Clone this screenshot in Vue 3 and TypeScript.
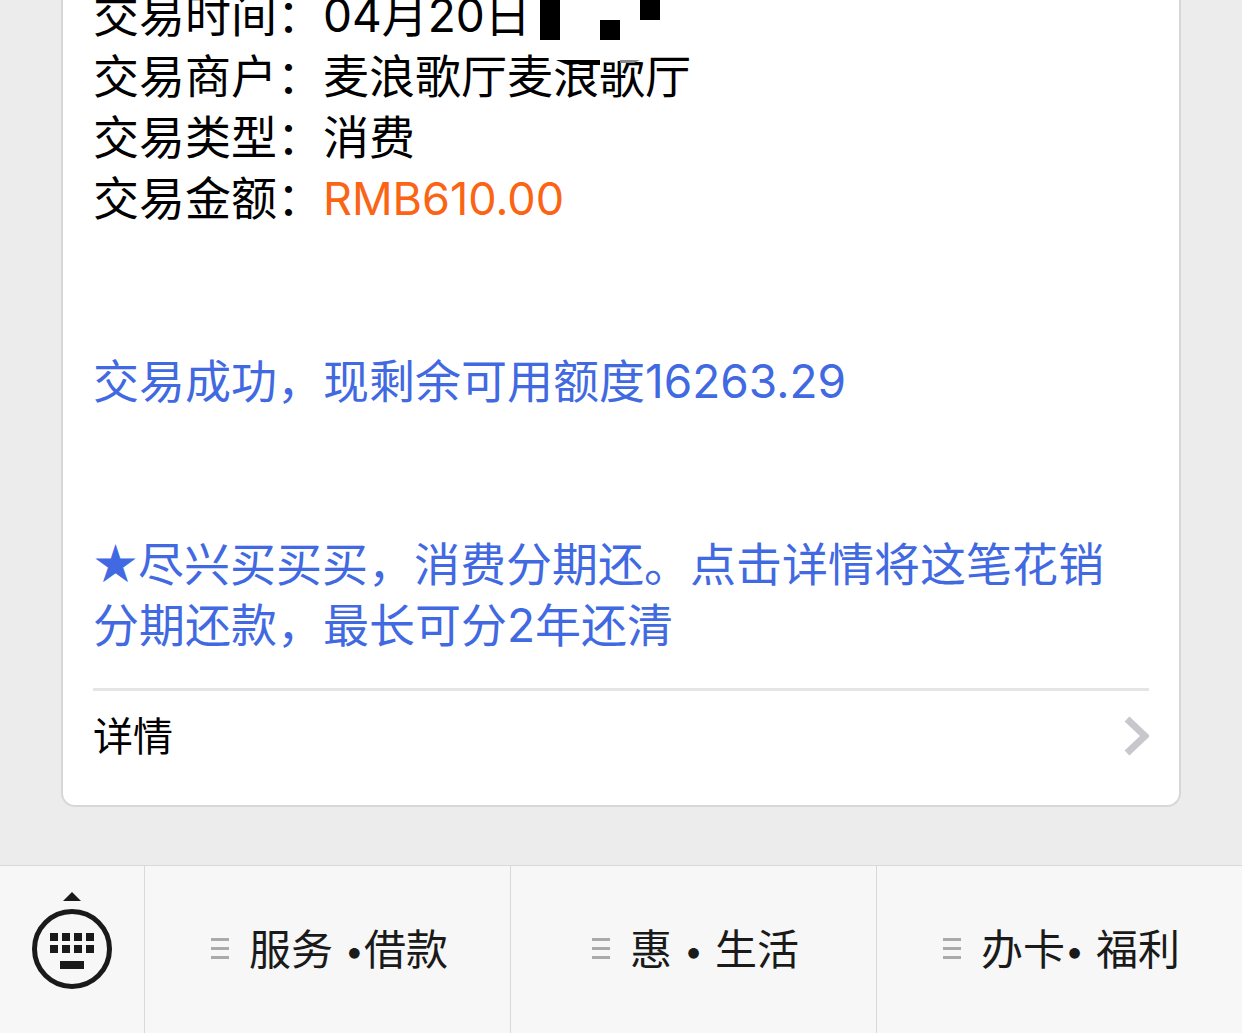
<script setup lang="ts">
interface Field {
  label: string
  value: string
  accent?: boolean
  masked?: boolean
}

interface Menu {
  before: string
  after: string
}

const fields: Field[] = [
  { label: '交易时间', value: '04月20日', masked: true },
  { label: '交易商户', value: '麦浪歌厅麦浪歌厅' },
  { label: '交易类型', value: '消费' },
  { label: '交易金额', value: 'RMB610.00', accent: true },
]

const menus: Menu[] = [
  { before: '服务 ', after: '借款' },
  { before: '惠 ', after: ' 生活' },
  { before: '办卡', after: ' 福利' },
]
const keyColumns: number[] = [18, 30, 42, 54]
</script>

<template>
  <div class="screen" lang="zh-CN">
    <main class="chat">
      <article class="card">
        <div class="message">
          <p v-for="field in fields" :key="field.label" class="row">
            <span>{{ field.label }}：</span><span :class="{ accent: field.accent }">{{ field.value }}</span>
            <svg v-if="field.masked" class="mask" width="120" height="66" viewBox="0 0 120 66" aria-hidden="true">
              <path fill="#fff" d="M16 40h84v21H16z" />
              <path d="M0 0h20v40H0zM60 20h20v20H60zM100 0h20v20H100zM16 60h44v5H40l-2-1-10 1z" />
              <path fill="#888" d="M80 60h20l-6 3H80z" />
            </svg>
          </p>
          <p class="notice">交易成功，现剩余可用额度16263.29</p>
          <p class="notice"><span class="star">★</span>尽兴买买买，消费分期还。点击详情将这笔花销<br />分期还款，最长可分2年还清</p>
        </div>
        <a class="details" href="#details">
          <span>详情</span>
          <svg width="26" height="40" viewBox="0 0 26 40" aria-hidden="true">
            <path d="M4 3 22 20 4 37" fill="none" stroke="#c7c7cc" stroke-width="7" />
          </svg>
        </a>
      </article>
    </main>
    <nav class="bar">
      <button class="keyboard" type="button" aria-label="键盘">
        <svg width="80" height="98" viewBox="0 0 80 98" fill="#1a1a1a" aria-hidden="true">
          <path d="M31 10 40 1l9 9z" />
          <circle cx="40" cy="58" r="37.5" fill="none" stroke="#1a1a1a" stroke-width="5" />
          <template v-for="x in keyColumns" :key="x">
            <rect :x="x" y="42" width="8" height="8" />
            <rect :x="x" y="54" width="8" height="8" />
          </template>
          <rect x="28" y="70" width="24" height="8" />
        </svg>
      </button>
      <button v-for="menu in menus" :key="menu.before" class="menu" type="button">
        <svg width="18" height="22" viewBox="0 0 18 22" fill="#aaa" aria-hidden="true">
          <path d="M0 0h18v3H0zM0 9h18v3H0zM0 18h18v3H0z" />
        </svg>
        <span class="name">{{ menu.before }}<span class="dot">•</span>{{ menu.after }}</span>
      </button>
    </nav>
  </div>
</template>

<style>
body {
  margin: 0;
  background: #ececec;
}
</style>

<style scoped>
.screen {
  display: flex;
  flex-direction: column;
  min-height: 100vh;
  overflow: hidden;
  font-family: Inter, "Noto Sans CJK SC", sans-serif;
  background: #ececec;
}

.chat {
  flex: 1;
  padding: 0 61px 58px;
}

.card {
  margin-top: -15px;
  padding: 0 30px;
  border: 2px solid #d7d7d7;
  border-top: 0;
  border-radius: 0 0 14px 14px;
  background: #fff;
}

.message {
  padding-bottom: 32px;
  border-bottom: 3px solid #e5e5e5;
  font-size: 46px;
  line-height: 61px;
  color: #000;
}

.row,
.notice {
  position: relative;
  margin: 0;
}

.row {
  height: 61px;
}

.accent {
  font-size: 45px;
  color: #fa6414;
}

.notice {
  margin-top: 122px;
  color: #4169e1;
}

.star {
  font-size: 43px;
  line-height: 1;
  -webkit-text-stroke: 1px #4169e1;
}

.mask {
  position: absolute;
  z-index: 1;
  top: 15px;
  left: 447px;
}

.details {
  display: flex;
  align-items: center;
  justify-content: space-between;
  height: 90px;
  padding-bottom: 24px;
  font-size: 40px;
  color: #000;
  text-decoration: none;
}

.details span,
.name {
  padding-bottom: 4px;
}

.bar {
  display: flex;
  height: 167px;
  border-top: 1px solid #d9d9d9;
  background: #f7f7f7;
}

.bar button {
  display: flex;
  align-items: center;
  justify-content: center;
  padding: 0;
  border: 0;
  background: none;
  font-family: inherit;
  font-size: 42px;
  color: #1a1a1a;
}

.bar .keyboard {
  width: 144px;
  padding-bottom: 20px;
}

.bar .menu {
  flex: 1;
  gap: 20px;
  padding: 0 0 2px 4px;
  border-left: 1px solid #d9d9d9;
  white-space: pre;
}

.dot {
  font-size: 34px;
  line-height: 1;
  vertical-align: 2px;
}
</style>
